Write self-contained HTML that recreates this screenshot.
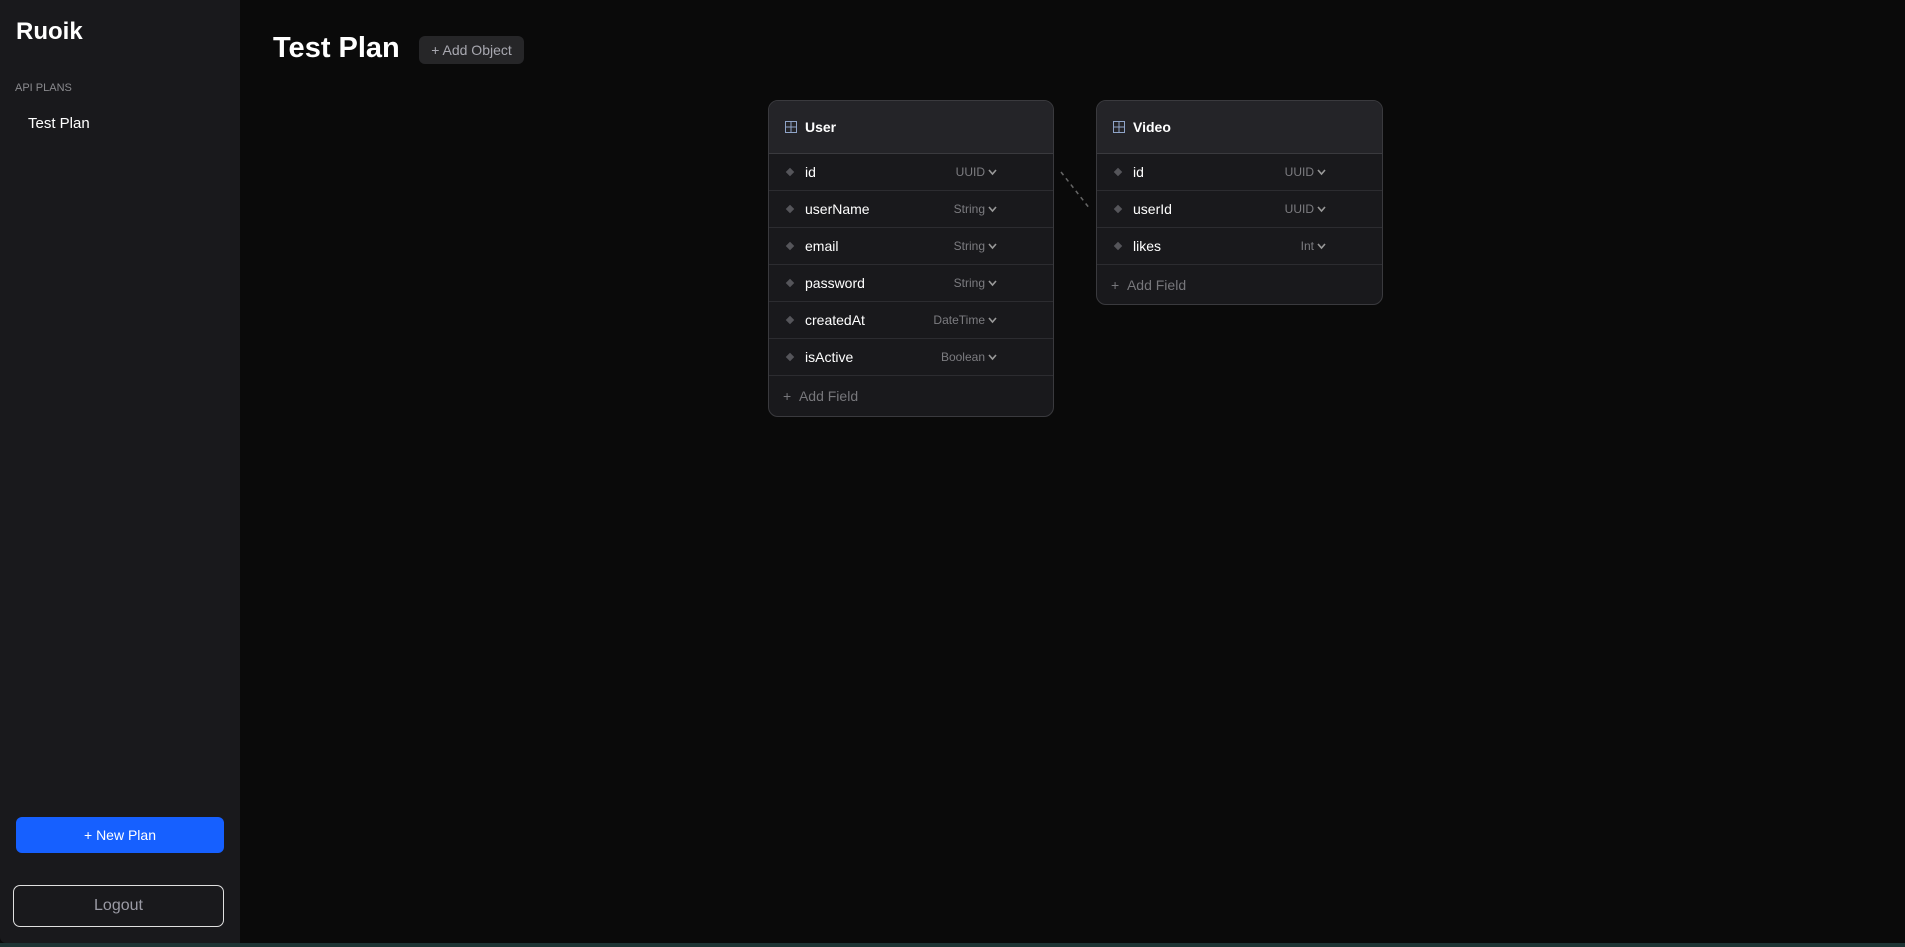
<!DOCTYPE html>
<html><head><meta charset="utf-8"><style>
*{box-sizing:border-box;margin:0;padding:0}
body{width:1905px;height:947px;background:#0a0a0a;font-family:"Liberation Sans",sans-serif;position:relative;overflow:hidden}
.side{position:absolute;left:0;top:0;width:240px;height:943px;background:#19191c;border-bottom-left-radius:6px}
.strip{position:absolute;left:0;top:943px;width:1905px;height:4px;background:#1e3434}
.abs{position:absolute}
.card{position:absolute;background:#19191c;border:1px solid #3a3a3e;border-radius:10px;overflow:hidden}
.hd{height:53px;background:#242428;border-bottom:1px solid #3a3a3e;display:flex;align-items:center;padding-left:16px;color:#fff;font-weight:bold;font-size:14px}
.hd svg{margin-right:8px}
.row{height:37px;border-bottom:1px solid #2c2c30;display:flex;align-items:center;position:relative;color:#fff;font-size:14px}
.dia{position:absolute;left:18px;width:6px;height:6px;background:#55555a;transform:rotate(45deg)}
.nm{position:absolute;left:36px}
.tp{position:absolute;right:68px;color:#7c7c80;font-size:12px}
.cv{position:absolute;right:56px;top:15px}
.add{height:40px;display:flex;align-items:center;padding-left:14px;color:#77777b;font-size:14px}
</style></head><body>
<div class="side"></div>
<div class="strip"></div>
<div class="abs" style="left:16px;top:18px;color:#fff;font-size:24px;font-weight:bold">Ruoik</div>
<div class="abs" style="left:15px;top:82px;color:#8a8a8e;font-size:11px">API PLANS</div>
<div class="abs" style="left:28px;top:115px;color:#fff;font-size:15px">Test Plan</div>
<div class="abs" style="left:16px;top:817px;width:208px;height:36px;background:#1660ff;border-radius:6px;color:#fff;font-size:14px;display:flex;align-items:center;justify-content:center">+ New Plan</div>
<div class="abs" style="left:13px;top:885px;width:211px;height:42px;border:1px solid #e0e0e0;border-radius:7px;color:#9a9aa4;font-size:16px;display:flex;align-items:center;justify-content:center">Logout</div>
<div class="abs" style="left:273px;top:32px;color:#fff;font-size:29px;font-weight:bold">Test Plan</div>
<div class="abs" style="left:419px;top:36px;width:105px;height:28px;background:#262628;border-radius:6px;color:#a8a8b0;font-size:14px;display:flex;align-items:center;justify-content:center">+ Add Object</div>
<svg class="abs" style="left:1055px;top:165px" width="45" height="50"><line x1="6" y1="7" x2="35" y2="44" stroke="#666" stroke-width="1.5" stroke-dasharray="4 4"/></svg>

<div class="card" style="left:768px;top:100px;width:286px;height:317px">
<div class="hd"><svg width="12" height="12" viewBox="0 0 12 12"><rect x="0.5" y="0.5" width="11" height="11" fill="none" stroke="#8fa4c8"/><line x1="6" y1="0" x2="6" y2="12" stroke="#8fa4c8"/><line x1="0" y1="6" x2="12" y2="6" stroke="#8fa4c8"/></svg>User</div>
<div class="row"><i class="dia"></i><span class="nm">id</span><span class="tp">UUID</span><svg class="cv" width="9" height="7"><path d="M1 1l3.5 4L8 1" stroke="#999" stroke-width="1.6" fill="none"/></svg></div>
<div class="row"><i class="dia"></i><span class="nm">userName</span><span class="tp">String</span><svg class="cv" width="9" height="7"><path d="M1 1l3.5 4L8 1" stroke="#999" stroke-width="1.6" fill="none"/></svg></div>
<div class="row"><i class="dia"></i><span class="nm">email</span><span class="tp">String</span><svg class="cv" width="9" height="7"><path d="M1 1l3.5 4L8 1" stroke="#999" stroke-width="1.6" fill="none"/></svg></div>
<div class="row"><i class="dia"></i><span class="nm">password</span><span class="tp">String</span><svg class="cv" width="9" height="7"><path d="M1 1l3.5 4L8 1" stroke="#999" stroke-width="1.6" fill="none"/></svg></div>
<div class="row"><i class="dia"></i><span class="nm">createdAt</span><span class="tp">DateTime</span><svg class="cv" width="9" height="7"><path d="M1 1l3.5 4L8 1" stroke="#999" stroke-width="1.6" fill="none"/></svg></div>
<div class="row"><i class="dia"></i><span class="nm">isActive</span><span class="tp">Boolean</span><svg class="cv" width="9" height="7"><path d="M1 1l3.5 4L8 1" stroke="#999" stroke-width="1.6" fill="none"/></svg></div>
<div class="add">+&nbsp;&nbsp;Add Field</div>
</div>

<div class="card" style="left:1096px;top:100px;width:287px;height:205px">
<div class="hd"><svg width="12" height="12" viewBox="0 0 12 12"><rect x="0.5" y="0.5" width="11" height="11" fill="none" stroke="#8fa4c8"/><line x1="6" y1="0" x2="6" y2="12" stroke="#8fa4c8"/><line x1="0" y1="6" x2="12" y2="6" stroke="#8fa4c8"/></svg>Video</div>
<div class="row"><i class="dia"></i><span class="nm">id</span><span class="tp">UUID</span><svg class="cv" width="9" height="7"><path d="M1 1l3.5 4L8 1" stroke="#999" stroke-width="1.6" fill="none"/></svg></div>
<div class="row"><i class="dia"></i><span class="nm">userId</span><span class="tp">UUID</span><svg class="cv" width="9" height="7"><path d="M1 1l3.5 4L8 1" stroke="#999" stroke-width="1.6" fill="none"/></svg></div>
<div class="row"><i class="dia"></i><span class="nm">likes</span><span class="tp">Int</span><svg class="cv" width="9" height="7"><path d="M1 1l3.5 4L8 1" stroke="#999" stroke-width="1.6" fill="none"/></svg></div>
<div class="add">+&nbsp;&nbsp;Add Field</div>
</div>
</body></html>
